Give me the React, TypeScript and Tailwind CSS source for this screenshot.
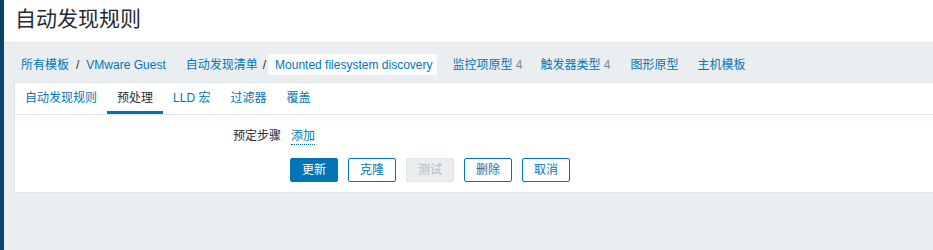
import React from "react";

const font = { fontFamily: '"Liberation Sans", Arial, "Noto Sans CJK SC", sans-serif' };

export default function App() {
  const tabs = ["自动发现规则", "预处理", "LLD 宏", "过滤器", "覆盖"];
  return (
    <div className="flex w-[933px] h-[250px] overflow-hidden bg-[#ebeef0] text-[12px] leading-[14px] text-[#1f2c33]" style={font}>
      <div className="w-[4px] shrink-0 bg-[#0b4468]" />
      <div className="flex-1 flex flex-col min-w-0">
        <div className="h-[43px] bg-white border-b border-[#dfe4e7] pl-[11px] pt-[7px]">
          <h1 className="text-[21px] leading-[24px] font-normal text-[#1f2c33]">自动发现规则</h1>
        </div>
        <div className="h-[39px] pt-[11px] pl-[17px]">
          <div className="flex items-center h-[21px] text-[#0275b8] whitespace-nowrap">
            <span>所有模板</span>
            <span className="mx-[7px] text-[#1f2c33]">/</span>
            <span>VMware Guest</span>
            <span className="ml-[20px]">自动发现清单</span>
            <span className="ml-[5px] mr-[2px] text-[#1f2c33]">/</span>
            <span className="bg-white h-[21px] pl-[7px] pr-[5px] flex items-center rounded-[2px]">Mounted filesystem discovery</span>
            <span className="ml-[15px]">监控项原型 <span className="text-[#768d99]">4</span></span>
            <span className="ml-[18px]">触发器类型 <span className="text-[#768d99]">4</span></span>
            <span className="ml-[20px]">图形原型</span>
            <span className="ml-[19px]">主机模板</span>
          </div>
        </div>
        <div className="ml-[10px] bg-white border-t border-l border-b border-[#dfe4e7]">
          <div className="flex h-[32px] border-b border-[#dfe4e7]">
            {tabs.map((t, i) => (
              <div
                key={t}
                className={
                  i === 1
                    ? "px-[10px] pt-[8px] pb-[6px] border-b-[3px] border-[#0275b8] text-[#1f2c33] whitespace-nowrap"
                    : "px-[10px] pt-[8px] pb-[6px] border-b-[3px] border-transparent text-[#0275b8] whitespace-nowrap"
                }
              >
                {t}
              </div>
            ))}
          </div>
          <div className="pt-[14px] pb-[10px]">
            <div className="flex h-[14px]">
              <div className="w-[266px] text-right">预定步骤</div>
              <div className="ml-[10px]">
                <span className="text-[#0275b8] border-b border-dotted border-[#0275b8] pb-[1px]">添加</span>
              </div>
            </div>
            <div className="flex gap-[10px] ml-[275px] mt-[15px]">
              <button className="h-[24px] px-[11px] rounded-[2px] bg-[#0275b8] border border-[#0275b8] text-white">更新</button>
              <button className="h-[24px] px-[11px] rounded-[2px] bg-white border border-[#0275b8] text-[#0275b8]">克隆</button>
              <button className="h-[24px] px-[11px] rounded-[2px] bg-[#ebeef0] border border-[#dfe4e7] text-[#acbbc2]">测试</button>
              <button className="h-[24px] px-[11px] rounded-[2px] bg-white border border-[#0275b8] text-[#0275b8]">删除</button>
              <button className="h-[24px] px-[11px] rounded-[2px] bg-white border border-[#0275b8] text-[#0275b8]">取消</button>
            </div>
          </div>
        </div>
      </div>
    </div>
  );
}
